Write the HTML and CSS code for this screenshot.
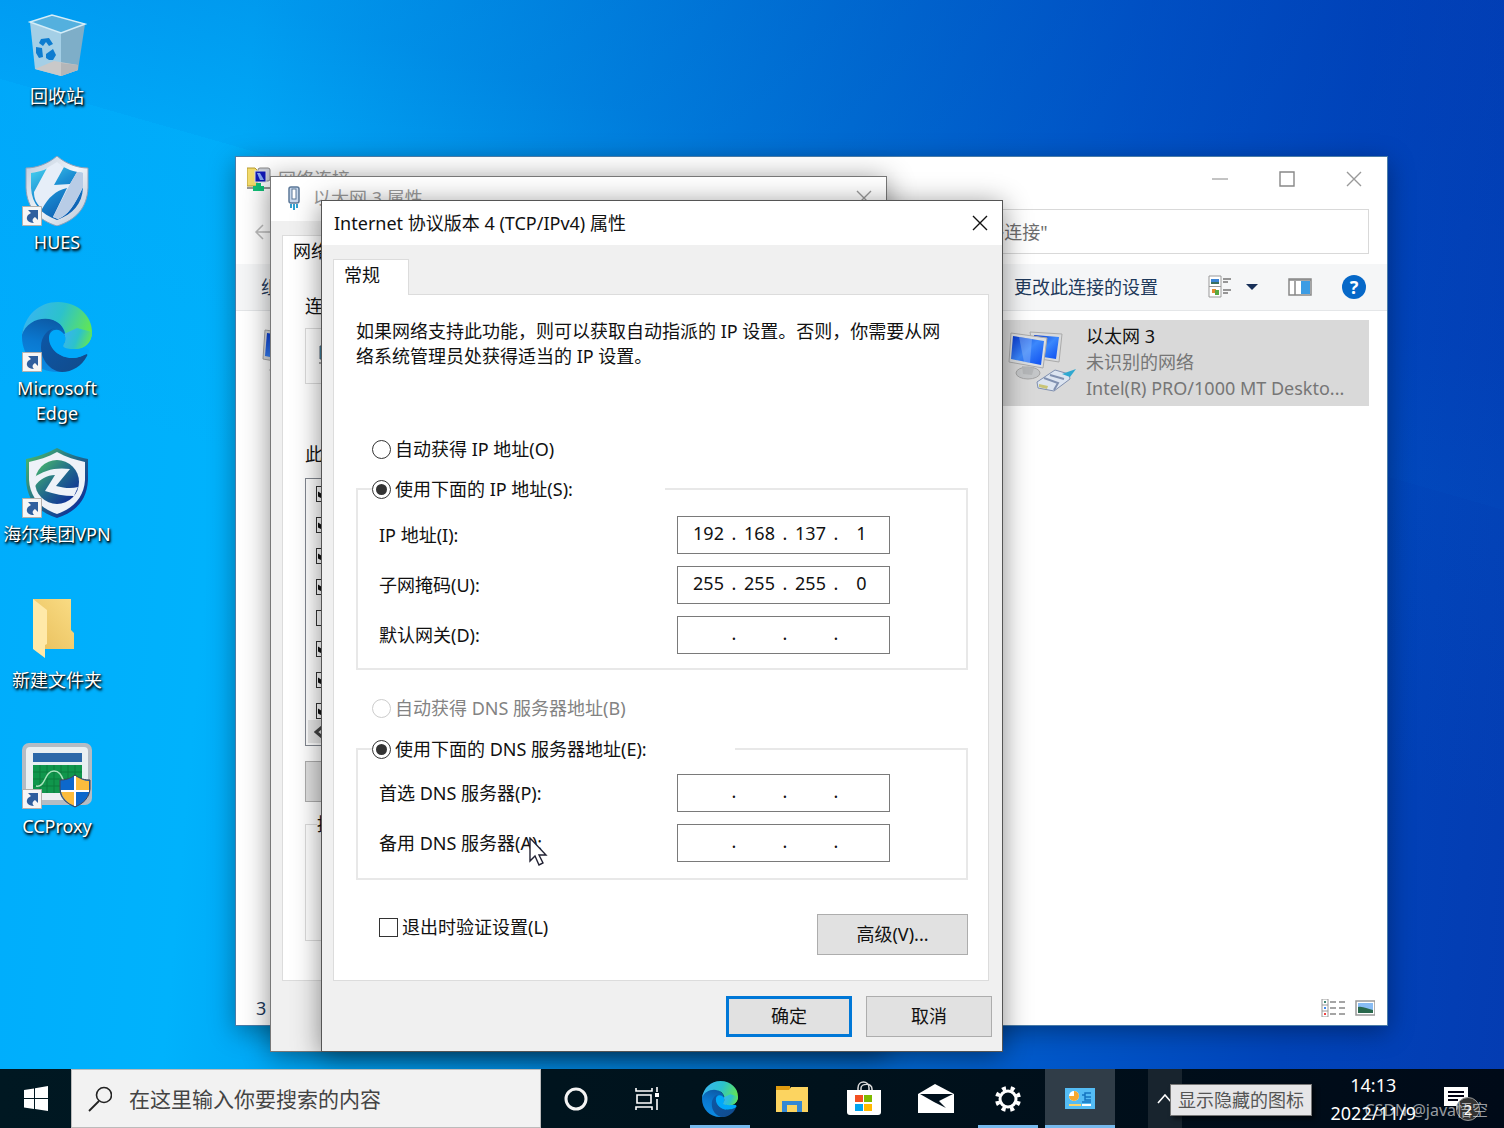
FILE: index.html
```html
<!DOCTYPE html>
<html lang="zh-CN">
<head>
    <meta charset="UTF-8">
    <meta name="viewport" content="width=device-width, initial-scale=1.0">
    <title>Internet 协议版本 4 (TCP/IPv4) 属性</title>
    <link rel="stylesheet" href="styles.css">
</head>
<body>
    <!-- shared icons -->
    <svg class="sprite" width="0" height="0" aria-hidden="true">
        <defs>
            <linearGradient id="edgeTop" x1="0" y1="0.3" x2="1" y2="0.6">
                <stop offset="0" stop-color="#38b4f2"/>
                <stop offset="0.5" stop-color="#2cc2cc"/>
                <stop offset="1" stop-color="#66e84c"/>
            </linearGradient>
            <linearGradient id="edgeBody" x1="0.6" y1="0" x2="0.3" y2="1">
                <stop offset="0" stop-color="#0c56a0"/>
                <stop offset="0.5" stop-color="#0a78d0"/>
                <stop offset="1" stop-color="#0c8ce4"/>
            </linearGradient>
            <linearGradient id="edgeDark" x1="0" y1="0" x2="1" y2="1">
                <stop offset="0" stop-color="#0c58a8"/>
                <stop offset="1" stop-color="#124a8a"/>
            </linearGradient>
            <linearGradient id="hFill" x1="0" y1="0" x2="0.6" y2="1">
                <stop offset="0" stop-color="#4cdcf4"/>
                <stop offset="0.5" stop-color="#1c90d4"/>
                <stop offset="1" stop-color="#0c5cb0"/>
            </linearGradient>
            <linearGradient id="hRim" x1="0" y1="0" x2="1" y2="1">
                <stop offset="0" stop-color="#b8c8da"/>
                <stop offset="0.5" stop-color="#f2f6fa"/>
                <stop offset="1" stop-color="#b4c2d4"/>
            </linearGradient>
            <linearGradient id="vpnFill" x1="0" y1="0" x2="1" y2="1">
                <stop offset="0" stop-color="#4cc068"/>
                <stop offset="0.5" stop-color="#20688c"/>
                <stop offset="1" stop-color="#0c1c98"/>
            </linearGradient>
            <linearGradient id="screen" x1="0" y1="0" x2="1" y2="1">
                <stop offset="0" stop-color="#0838d0"/>
                <stop offset="0.5" stop-color="#3c88fc"/>
                <stop offset="1" stop-color="#0c4cf0"/>
            </linearGradient>
            <linearGradient id="folderBack" x1="0" y1="1" x2="1" y2="0">
                <stop offset="0" stop-color="#e8bf5c"/>
                <stop offset="1" stop-color="#fadc84"/>
            </linearGradient>
        </defs>
        <symbol id="close" viewBox="0 0 16 16">
            <path d="M1 1 15 15M15 1 1 15" fill="none" stroke="currentColor" stroke-width="1.4"/>
        </symbol>
        <symbol id="edge" viewBox="0 0 70 70">
            <path d="M0 35C0 20 12 14 25 16C38 18 45 28 43 38L48 60L63 53C58 64 48 70 35 70C15 70 0 54 0 35Z" fill="url(#edgeBody)"/>
            <path d="M0 33C3 13 17 0 36 0C56 0 70 14 70 30C70 41 62 47 53 47C44 47 40 45 42 42C46 37 44 28 38 22C26 12 5 17 0 33Z" fill="url(#edgeTop)"/>
            <path d="M35 26C28 26 27 32 27 36C28 47 38 56 50 56C56 56 60 54 63 52C65 51 66 53 65 54C60 64 50 70 40 70C28 69 19 58 19 45C19 34 26 26 35 26Z" fill="url(#edgeDark)"/>
            <path d="M42 32C36 24 27 28 27 36C27 47 38 56 50 56C57 56 62 53 65 52C69 49 67 46 62 46C50 48 41 46 42 42C44 39 44 35 42 32Z" class="edge-gap"/>
            <path d="M42 32C45 37 43 40 42 42C39 46 45 47 53 47C62 47 70 41 70 30L55 26Z" fill="url(#edgeTop)"/>
        </symbol>
        <symbol id="shortcut" viewBox="0 0 20 20">
            <path d="M.5.5H19.500V19.500H.5Z" fill="#f6f6f6" stroke="#b4b0ac"/>
            <path d="M6 4H16V14L13 11C10 13 10 15 12 17C6 17 3 13 6 9L9 7Z" fill="#2f5f9e"/>
        </symbol>
        <symbol id="monitors" viewBox="0 0 70 70">
            <path d="M22 4 54 6 51 34 26 30Z" fill="#d8dadc" stroke="#aaa"/>
            <path d="M26 7 51 9 48 31 29 28Z" fill="url(#screen)"/>
            <ellipse cx="20" cy="45" rx="12" ry="6" fill="#c4c6c8" stroke="#a4a4a4"/>
            <path d="M14 38 26 40 24 47 15 46Z" fill="#b4b6b8"/>
            <path d="M3 5 39 10 35 40 1 34Z" fill="#dcdee0" stroke="#aaa"/>
            <path d="M5 8 36 13 33 37 3 31Z" fill="url(#screen)"/>
            <path d="M11 9 24 11 22 35 16 34Z" fill="#9cc4ff" opacity=".4"/>
            <path d="M29 54 47 42 61 46 62 51 46 63 30 60Z" fill="#dce4f0" stroke="#8090b0"/>
            <path d="M36 50 50 55 46 62M42 47 56 51" fill="none" stroke="#8090b0" stroke-width="2"/>
            <path d="M31 56 40 58 39 61 31 59Z" fill="#c8c478"/>
            <path d="M54 46 68 41 62 49Z" fill="#30a8d0"/>
        </symbol>
    </svg>

    <main class="desktop">
        <nav class="shortcuts" aria-label="桌面">
            <a class="shortcut" href="#bin">
                <svg viewBox="0 0 70 70">
                    <path d="M8 12 39 23 39 66 13 59Z" fill="#a4cfe6"/>
                    <path d="M39 23 63 14 56 60 39 66Z" fill="#7eaec8"/>
                    <path d="M13 59 32 51 56 55 56 60 39 66Z" fill="#c9c9c9"/>
                    <path d="M39 53 56 55 56 60 39 66Z" fill="#b4b6b8"/>
                    <path d="M8 12 30 5 63 14 39 23Z" fill="#54b0de" stroke="#d4edf8" stroke-width="1.500"/>
                    <g fill="#0c7cd0">
                        <path d="M19 29 27 28 31 34 27 36 24 32 21 36 17 33Z"/>
                        <path d="M14 37 20 38 21 47 17 48 14 43Z"/>
                        <path d="M24 44 31 39 34 45 31 50 27 50 24 48Z"/>
                    </g>
                </svg>
                <span>回收站</span>
            </a>
            <a class="shortcut" href="#hues">
                <svg viewBox="0 0 70 70">
                    <path d="M35 0C44 8 56 12 66 12V32C65 52 54 64 35 70C16 64 5 52 4 32V12C14 12 26 8 35 0Z" fill="url(#hRim)" stroke="#8ca0ba"/>
                    <path d="M35 7C44 13 52 16 61 17V32C60 48 51 58 35 64C19 58 10 48 9 32V17C18 16 26 13 35 7Z" fill="url(#hFill)"/>
                    <path d="M35 6 42 11 32 29 48 28 55 16 61 17V31C52 50 46 59 36 63L31 61 45 32C33 35 27 41 20 53 14 47 12 43 12 36L25 12Z" fill="#e6eef8"/>
                    <path d="M48 28 55 16 61 17V31C52 50 46 59 36 63L31 61Z" fill="#b8cce6"/>
                    <use href="#shortcut" x="0" y="50" width="20" height="20"/>
                </svg>
                <span>HUES</span>
            </a>
            <a class="shortcut" href="#edge-app">
                <svg viewBox="0 0 70 70">
                    <use href="#edge" width="70" height="70"/>
                    <use href="#shortcut" x="0" y="50" width="20" height="20"/>
                </svg>
                <span>Microsoft Edge</span>
            </a>
            <a class="shortcut" href="#vpn">
                <svg viewBox="0 0 70 70">
                    <path d="M35 0C46 6 56 9 66 11V32C65 52 54 64 35 70C16 64 5 52 4 32V11C14 9 24 6 35 0Z" fill="url(#vpnFill)"/>
                    <path d="M35 4C44 9 54 12 63 14V32C62 49 52 60 35 66C18 60 8 49 7 32V14C16 12 26 9 35 4Z" fill="#eef2f8"/>
                    <circle cx="35" cy="34" r="22" fill="url(#vpnFill)"/>
                    <path d="M11 30C22 22 34 19 48 21L34 38C42 40 49 41 56 39L52 48C42 48 32 46 23 43L33 27C25 27 18 31 13 38Z" fill="#eef2f8"/>
                    <use href="#shortcut" x="0" y="50" width="20" height="20"/>
                </svg>
                <span>海尔集团VPN</span>
            </a>
            <a class="shortcut" href="#folder">
                <svg viewBox="0 0 70 70">
                    <path d="M11 5H49V36L52 39V55H20Z" fill="url(#folderBack)"/>
                    <path d="M11 5 25 16V50L23 51V64L11 55Z" fill="#ffe9a8"/>
                </svg>
                <span>新建文件夹</span>
            </a>
            <a class="shortcut" href="#ccproxy">
                <svg viewBox="0 0 70 70">
                    <rect x="0" y="3" width="70" height="62" rx="7" fill="#b4bcc4"/>
                    <rect x="4" y="7" width="62" height="53" rx="4" fill="#eaf0f2"/>
                    <path d="M11 13H60V22H11Z" fill="#2c68a8"/>
                    <path d="M11 25H60V53H11Z" fill="#10964c"/>
                    <path d="M11 32H60M11 39H60M11 46H60M18 25V53M25 25V53M32 25V53M39 25V53M46 25V53M53 25V53" stroke="#0a7c3c"/>
                    <path d="M14 46C24 48 22 31 32 31S40 46 47 46" fill="none" stroke="#a8e4bc" stroke-width="1.500"/>
                    <path d="M53 35C58 39 63 40 68 40V49C67 58 62 63 53 67C44 63 38 58 38 49V40C43 40 48 39 53 35Z" fill="#0c68cc" stroke="#445"/>
                    <path d="M53 36C58 39 63 41 67 41V51H53ZM53 51V66C45 63 40 58 39 51Z" fill="#fcbc3c"/>
                    <path d="M53 36V66M39 51H67" stroke="#fff" stroke-width="2"/>
                    <use href="#shortcut" x="0" y="49" width="20" height="20"/>
                </svg>
                <span>CCProxy</span>
            </a>
        </nav>

        <section class="window connections" aria-label="网络连接">
            <header class="titlebar inactive">
                <svg width="24" height="24" viewBox="0 0 24 24">
                    <path d="M0 1H8L10 3V19H0Z" fill="#f4dc6c" stroke="#b89c30"/>
                    <rect x="11" y="1" width="12" height="13" rx="2" fill="#c8ccd4" stroke="#888"/>
                    <rect x="8" y="4" width="11" height="11" fill="#1018b8" stroke="#d8dce4"/>
                    <path d="M10 6H13L17 13H13Z" fill="#88a8f4"/>
                    <path d="M0 21H24" stroke="#999" stroke-width="2"/>
                    <path d="M9 16H14V19H17V24H6V19H9Z" fill="#10c078"/>
                </svg>
                <h2>网络连接</h2>
                <div class="window-buttons">
                    <button aria-label="最小化"><svg width="16" height="16"><path d="M0 8H16" stroke="#888"/></svg></button>
                    <button aria-label="最大化"><svg width="16" height="16"><path d="M1 1H15V15H1Z" fill="none" stroke="#888" stroke-width="1.400"/></svg></button>
                    <button aria-label="关闭"><svg width="16" height="16"><use href="#close"/></svg></button>
                </div>
            </header>
            <div class="address">
                <button aria-label="后退"><svg width="18" height="18" viewBox="0 0 18 18"><path d="M17 9H2M9 2 2 9 9 16" fill="none" stroke="#bbb" stroke-width="1.500"/></svg></button>
                <input type="text" class="search" aria-label="搜索" placeholder='搜索"网络连接"'>
            </div>
            <div class="toolbar">
                <button>组织</button>
                <button class="toolbar-change">更改此连接的设置</button>
                <div class="toolbar-icons">
                    <button aria-label="更改视图">
                        <svg width="50" height="24" viewBox="0 0 50 24">
                            <path d="M1 1H13V22H1ZM1 11.500H13" fill="#fff" stroke="#999"/>
                            <path d="M3 4H11V9H3Z" fill="#3c84d4"/><path d="M3 7H11V9H3Z" fill="#3a7060"/>
                            <path d="M4 14H8V18H4Z" fill="#e08c30"/><path d="M7 15H11V20H7Z" fill="#58a840"/>
                            <path d="M15 4H23M15 7H20M15 15H23M15 18H20" stroke="#777" stroke-width="1.300"/>
                            <path d="M38 9H50L44 15Z" fill="#183058"/>
                        </svg>
                    </button>
                    <button aria-label="预览窗格">
                        <svg width="24" height="18" viewBox="0 0 24 18">
                            <path d="M1 1H23V17H1Z" fill="#fff" stroke="#888" stroke-width="1.500"/>
                            <path d="M1 2H23M7 3V17" stroke="#888" stroke-width="1.500"/>
                            <path d="M13 3H22V16H13Z" fill="#3c9ce4"/>
                        </svg>
                    </button>
                    <button class="help" aria-label="帮助">?</button>
                </div>
            </div>
            <div class="adapters">
                <div class="adapter">
                    <svg width="70" height="70"><use href="#monitors"/></svg>
                </div>
                <div class="adapter selected">
                    <svg width="70" height="70"><use href="#monitors"/></svg>
                    <div>
                        <h3>以太网 3</h3>
                        <p>未识别的网络</p>
                        <p>Intel(R) PRO/1000 MT Deskto...</p>
                    </div>
                </div>
            </div>
            <footer class="statusbar">
                <span>3</span>
                <svg width="54" height="18" viewBox="0 0 54 18">
                    <path d="M1 0H7V18H1ZM1 6H7M1 12H7" fill="#fff" stroke="#999"/>
                    <path d="M3 3H5" stroke="#487" stroke-width="2"/><path d="M3 9H5" stroke="#48e" stroke-width="2"/><path d="M3 15H5" stroke="#e44" stroke-width="2"/>
                    <path d="M9 3H15M18 3H24M9 9H15M18 9H24M9 15H15M18 15H24" stroke="#888" stroke-width="1.500"/>
                    <path d="M35 2H54V16H35Z" fill="#fff" stroke="#999" stroke-width="1.500"/>
                    <path d="M37 4H52V14H37Z" fill="#88bcf4"/>
                    <path d="M37 8C42 7 46 10 52 11V14H37Z" fill="#28684c"/>
                </svg>
            </footer>
        </section>

        <section class="window dialog adapter-dialog" aria-label="以太网 3 属性">
            <header class="titlebar inactive">
                <svg width="14" height="24" viewBox="0 0 14 24">
                    <rect x="2" y="1" width="10" height="16" rx="2" fill="#c8d8ec" stroke="#5c7898" stroke-width="1.500"/>
                    <rect x="5" y="3" width="4" height="10" fill="#fff" stroke="#5c7898"/>
                    <path d="M4 18V22M7 18V24M10 18V22" stroke="#30a0d0" stroke-width="2"/>
                </svg>
                <h2>以太网 3 属性</h2>
                <button class="close" aria-label="关闭"><svg width="16" height="16"><use href="#close"/></svg></button>
            </header>
            <div class="dialog-body">
                <button class="tab">网络</button>
                <div class="panel">
                    <p>连接时使用:</p>
                    <div class="adapter-name">
                        <svg width="22" height="22" viewBox="0 0 22 22"><path d="M1 1H21V14H1Z" fill="#2c9cc8" stroke="#567"/><path d="M0 18H22" stroke="#aaa" stroke-width="2"/></svg>
                    </div>
                    <p class="list-title">此连接使用下列项目(O):</p>
                    <div class="protocols">
                        <input type="checkbox" aria-label="Microsoft 网络客户端" checked>
                        <input type="checkbox" aria-label="文件和打印机共享" checked>
                        <input type="checkbox" aria-label="QoS 数据包计划程序" checked>
                        <input type="checkbox" aria-label="Internet 协议版本 4" checked>
                        <input type="checkbox" aria-label="网络适配器多路传送器">
                        <input type="checkbox" aria-label="LLDP 协议驱动程序" checked>
                        <input type="checkbox" aria-label="Internet 协议版本 6" checked>
                        <input type="checkbox" aria-label="链路层拓扑发现" checked>
                        <div class="scroll"><svg width="10" height="12"><path d="M8 1 2 6 8 11" fill="none" stroke="#444" stroke-width="3"/></svg></div>
                    </div>
                    <button class="button" aria-label="安装"></button>
                    <fieldset class="description">
                        <legend>描述</legend>
                    </fieldset>
                </div>
                <div class="actions">
                    <button class="button" aria-label="确定"></button>
                    <button class="button" aria-label="取消"></button>
                </div>
            </div>
        </section>

        <section class="window dialog ip-dialog" aria-label="Internet 协议版本 4 (TCP/IPv4) 属性">
            <header class="titlebar">
                <h2>Internet 协议版本 4 (TCP/IPv4) 属性</h2>
                <button class="close" aria-label="关闭"><svg width="16" height="16"><use href="#close"/></svg></button>
            </header>
            <form class="dialog-body">
                <button type="button" class="tab">常规</button>
                <div class="panel">
                    <p class="intro">如果网络支持此功能，则可以获取自动指派的 IP 设置。否则，你需要从网<br>络系统管理员处获得适当的 IP 设置。</p>

                    <label class="choice auto-ip"><input type="radio" name="ip">自动获得 IP 地址(O)</label>
                    <fieldset class="group ip-group">
                        <legend><label class="choice"><input type="radio" name="ip" checked>使用下面的 IP 地址(S):</label></legend>
                        <div class="field">
                            <label for="ip1">IP 地址(I):</label>
                            <div class="octets">
                                <input id="ip1" type="text" value="192"><span>.</span><input type="text" aria-label="IP 2" value="168"><span>.</span><input type="text" aria-label="IP 3" value="137"><span>.</span><input type="text" aria-label="IP 4" value="1">
                            </div>
                        </div>
                        <div class="field">
                            <label for="mask1">子网掩码(U):</label>
                            <div class="octets">
                                <input id="mask1" type="text" value="255"><span>.</span><input type="text" aria-label="掩码 2" value="255"><span>.</span><input type="text" aria-label="掩码 3" value="255"><span>.</span><input type="text" aria-label="掩码 4" value="0">
                            </div>
                        </div>
                        <div class="field">
                            <label for="gate1">默认网关(D):</label>
                            <div class="octets">
                                <input id="gate1" type="text"><span>.</span><input type="text" aria-label="网关 2"><span>.</span><input type="text" aria-label="网关 3"><span>.</span><input type="text" aria-label="网关 4">
                            </div>
                        </div>
                    </fieldset>

                    <label class="choice auto-dns"><input type="radio" name="dns" disabled>自动获得 DNS 服务器地址(B)</label>
                    <fieldset class="group dns-group">
                        <legend><label class="choice"><input type="radio" name="dns" checked>使用下面的 DNS 服务器地址(E):</label></legend>
                        <div class="field">
                            <label for="dns1">首选 DNS 服务器(P):</label>
                            <div class="octets">
                                <input id="dns1" type="text"><span>.</span><input type="text" aria-label="首选 2"><span>.</span><input type="text" aria-label="首选 3"><span>.</span><input type="text" aria-label="首选 4">
                            </div>
                        </div>
                        <div class="field">
                            <label for="alt1">备用 DNS 服务器(A):</label>
                            <div class="octets">
                                <input id="alt1" type="text"><span>.</span><input type="text" aria-label="备用 2"><span>.</span><input type="text" aria-label="备用 3"><span>.</span><input type="text" aria-label="备用 4">
                            </div>
                        </div>
                    </fieldset>

                    <div class="panel-bottom">
                        <label class="choice validate"><input type="checkbox">退出时验证设置(L)</label>
                        <button type="button" class="button wide">高级(V)...</button>
                    </div>
                </div>
                <div class="actions">
                    <button type="button" class="button primary">确定</button>
                    <button type="button" class="button">取消</button>
                </div>
            </form>
        </section>

        <svg class="cursor" width="20" height="30" viewBox="0 0 20 30">
            <path d="M1 1V24L6 19 10 28 14 26 10 18H17Z" fill="#fff" stroke="#223" stroke-width="1.400"/>
        </svg>
    </main>

    <footer class="taskbar">
        <button class="start" aria-label="开始">
            <svg width="24" height="26" viewBox="0 0 24 26"><path d="M0 4 10 2.500V12H0ZM11 2.300 24 0V12H11ZM0 13H10V23L0 21.500ZM11 13H24V25L11 23Z" fill="#fff"/></svg>
        </button>
        <div class="task-search">
            <svg width="24" height="26" viewBox="0 0 24 26"><circle cx="16" cy="9" r="7.500" fill="none" stroke="#222" stroke-width="1.600"/><path d="M11 15 1 25" stroke="#222" stroke-width="1.800"/></svg>
            <input type="text" aria-label="搜索" placeholder="在这里输入你要搜索的内容">
        </div>
        <div class="apps">
            <button aria-label="Cortana"><svg width="24" height="24"><circle cx="12" cy="12" r="10" fill="none" stroke="#f4f4f4" stroke-width="3"/></svg></button>
            <button aria-label="任务视图">
                <svg width="26" height="24" viewBox="0 0 26 24"><path d="M1 1V4H17V1M1 23V20H17V23M2 8H16V16H2ZM22 0V5M22 12V23" fill="none" stroke="#fff" stroke-width="1.600"/><path d="M20 6H24V10H20Z" fill="#fff"/></svg>
            </button>
            <button class="running edge-task" aria-label="Microsoft Edge"><svg width="36" height="36"><use href="#edge"/></svg></button>
            <button aria-label="文件资源管理器">
                <svg width="32" height="28" viewBox="0 0 32 28"><path d="M0 1H14V6H0Z" fill="#e09c10"/><path d="M0 5H13L15 2H32V27H0Z" fill="#fcd460"/><path d="M6 16H26V27H21V20H11V27H6Z" fill="#3488d4"/></svg>
            </button>
            <button aria-label="Microsoft Store">
                <svg width="34" height="36" viewBox="0 0 34 36">
                    <path d="M11 11V7C11 -1 22 -1 22 7V11M14 11V7C14 3 25 1 25 8V11" fill="none" stroke="#ddd" stroke-width="1.500"/>
                    <path d="M0 9H34V31Q34 34 31 34H3Q0 34 0 31Z" fill="#fff"/>
                    <path d="M8 14H16V21H8Z" fill="#f25022"/><path d="M17 14H25V21H17Z" fill="#7fba00"/><path d="M8 23H16V30H8Z" fill="#00a4ef"/><path d="M17 23H25V30H17Z" fill="#ffb900"/>
                </svg>
            </button>
            <button aria-label="邮件">
                <svg width="36" height="30" viewBox="0 0 36 30"><path d="M0 10 17 0 36 10V29H0Z" fill="#fff"/><path d="M2 10H35L21 17 28 24 16 18Z" fill="#00101c"/></svg>
            </button>
            <button class="running" aria-label="设置">
                <svg width="28" height="28" viewBox="0 0 28 28"><circle cx="14" cy="14" r="8" fill="none" stroke="#fff" stroke-width="3"/><circle cx="14" cy="14" r="11" fill="none" stroke="#fff" stroke-width="4" stroke-dasharray="4 4.640" transform="rotate(12 14 14)"/></svg>
            </button>
            <button class="running active" aria-label="控制面板">
                <svg width="30" height="22" viewBox="0 0 30 22"><path d="M0 0H30V21H0Z" fill="#54bcf4"/><circle cx="9" cy="8" r="5" fill="#fff"/><path d="M9 8V3A5 5 0 1 1 4 8Z" fill="#f4a830"/><path d="M17 7H20V5H26M20 7V12H26M20 9H26M17 14H26" fill="none" stroke="#1474c0" stroke-width="1.500"/><path d="M4 17H16" stroke="#fcd468" stroke-width="2"/><path d="M17 17H26" stroke="#fff" stroke-width="2"/></svg>
            </button>
        </div>
        <div class="tray">
            <button class="chevron" aria-describedby="trayTip" aria-label="隐藏的图标"><svg width="16" height="10"><path d="M1 9 8 1 15 9" fill="none" stroke="#fff" stroke-width="1.600"/></svg></button>
            <div class="tooltip" id="trayTip" role="tooltip">显示隐藏的图标</div>
            <div class="clock"><time>14:13</time><span>2022/11/9</span></div>
            <button class="notices" aria-label="通知">
                <svg width="24" height="24" viewBox="0 0 24 24"><path d="M0 0H24V19H16L12 23V19H0Z" fill="#fff"/><path d="M4 5H20M4 9H20M4 13H14" stroke="#001" stroke-width="1.800"/></svg>
                <span class="badge">2</span>
            </button>
        </div>
        <span class="watermark">CSDN @java悟空</span>
    </footer>
</body>
</html>
```

FILE: styles.css
```css
* {
    box-sizing: border-box;
}
body {
    margin: 0;
    min-height: 100vh;
    display: flex;
    flex-direction: column;
    overflow: hidden;
    font-family: "Noto Sans", "Noto Sans CJK SC", sans-serif;
    font-size: 18px;
    line-height: 26px;
    color: #111;
}
h2, h3, p {
    margin: 0;
    font-size: inherit;
    font-weight: normal;
}
button, input {
    font: inherit;
    color: inherit;
}
button {
    padding: 0;
    border: none;
    background: none;
}
svg {
    flex: none;
    display: block;
}
.sprite {
    position: absolute;
}
.edge-gap {
    fill: #00a8fa;
}
.edge-task .edge-gap {
    fill: #00121c;
}

/* desktop */
.desktop {
    position: relative;
    flex: 1;
    background:
        linear-gradient(196deg, rgba(0, 60, 180, 0.3) 0%, rgba(0, 70, 190, 0.22) 24%, rgba(0, 110, 215, 0.14) 34%, rgba(0, 120, 220, 0.08) 34%, rgba(0, 180, 255, 0) 55%),
        linear-gradient(95deg, #00acfc 0%, #00b2fc 16%, #0096ea 34%, #0074d6 54%, #0056c8 72%, #0044ba 86%, #043cb2 100%);
}
.shortcuts {
    display: flex;
    flex-direction: column;
    width: 114px;
    padding-top: 10px;
}
.shortcut {
    display: flex;
    flex-direction: column;
    align-items: center;
    gap: 4px;
    height: 146px;
    color: #fff;
    line-height: 25px;
    text-align: center;
    text-decoration: none;
    text-shadow: 1px 1px 2px #000, 1px 2px 3px #000;
}
.shortcut span {
    width: min-content;
    word-break: keep-all;
}
.shortcut svg {
    width: 70px;
    height: 70px;
}

/* windows */
.window {
    position: absolute;
    display: flex;
    flex-direction: column;
    background: #fff;
    border: 1px solid #4a7ca8;
    box-shadow: 0 6px 24px rgba(0, 0, 0, 0.35);
}
.titlebar {
    display: flex;
    align-items: center;
    height: 44px;
    padding: 0 13px 0 12px;
    background: #fff;
}
.titlebar h2 {
    flex: 1;
}
.inactive {
    color: #999;
}
.close svg {
    margin-right: 1px;
}

.connections {
    left: 235px;
    top: 156px;
    width: 1153px;
    height: 870px;
}
.connections .titlebar {
    gap: 7px;
    padding-left: 11px;
    padding-right: 25px;
}
.window-buttons {
    display: flex;
    gap: 51px;
}
.address {
    display: flex;
    justify-content: space-between;
    align-items: center;
    padding: 8px 18px 10px;
}
.search {
    width: 454px;
    height: 45px;
    padding: 0 9px;
    border: 1px solid #d9d9d9;
}
.search::placeholder {
    color: #6d6d6d;
}
.toolbar {
    display: flex;
    align-items: center;
    height: 47px;
    padding: 0 21px 0 25px;
    background: #f5f6f7;
    border-bottom: 1px solid #e4e6e8;
    color: #1e395b;
}
.toolbar-change {
    margin-left: auto;
    margin-right: 50px;
}
.toolbar-icons {
    display: flex;
    align-items: center;
    gap: 30px;
}
.help {
    width: 24px;
    height: 24px;
    border-radius: 50%;
    background: #0668c8;
    color: #fff;
    font-weight: bold;
    line-height: 24px;
}
.adapters {
    display: flex;
    justify-content: space-between;
    padding: 9px 18px 0 26px;
    flex: 1;
}
.adapter {
    display: flex;
    gap: 8px;
    height: 86px;
}
.adapter p {
    color: #767676;
}
.adapter svg {
    margin-top: 5px;
}
.adapter.selected {
    width: 372px;
    padding: 3px 11px;
    background: #d9d9d9;
    white-space: nowrap;
}
.statusbar {
    display: flex;
    justify-content: space-between;
    align-items: center;
    height: 35px;
    padding: 0 12px 0 20px;
    color: #1e395b;
}

/* dialogs */
.dialog {
    background: #f0f0f0;
    border-color: #555;
    box-shadow: 0 4px 26px rgba(0, 0, 0, 0.45);
}
.dialog-body {
    padding: 14px 13px 14px 11px;
}
.tab {
    display: block;
    position: relative;
    width: 76px;
    height: 36px;
    margin-bottom: -1px;
    padding: 0 10px 5px;
    background: #fff;
    border: 1px solid #dcdcdc;
    border-bottom: none;
    text-align: left;
}
.panel {
    padding: 24px 20px 25px 22px;
    background: #fff;
    border: 1px solid #dcdcdc;
}
.actions {
    display: flex;
    justify-content: flex-end;
    gap: 14px;
    padding-top: 15px;
    margin-right: -3px;
}
.button {
    display: block;
    width: 126px;
    height: 41px;
    padding-bottom: 2px;
    background: #e1e1e1;
    border: 1px solid #adadad;
}
.button.wide {
    width: 151px;
}
.button.primary {
    border: 3px solid #0078d7;
}

.adapter-dialog {
    left: 270px;
    top: 176px;
    width: 617px;
    border-color: #777;
}
.adapter-dialog .titlebar {
    gap: 12px;
    padding-left: 16px;
    padding-bottom: 3px;
}
.adapter-dialog .panel {
    padding: 22px 22px 39px;
}
.adapter-name {
    display: flex;
    align-items: center;
    height: 56px;
    margin-top: 9px;
    padding: 0 13px;
    border: 1px solid #dcdcdc;
}
.list-title {
    margin-top: 57px;
}
.protocols {
    display: flex;
    flex-direction: column;
    gap: 15px;
    height: 268px;
    margin: 11px 0 15px;
    padding-top: 7px;
    border: 1px solid #828790;
}
.scroll {
    display: flex;
    align-items: center;
    height: 23px;
    margin: -14px 0 0 2px;
    padding-left: 6px;
    background: #e8e8e8;
}
.description {
    height: 130px;
    margin: 9px 0 0;
    padding: 0 11px;
    border: 1px solid #dcdcdc;
}
.description legend {
    padding: 0;
}

.ip-dialog {
    left: 321px;
    top: 200px;
    width: 682px;
}
.intro {
    line-height: 25px;
    white-space: nowrap;
}
.choice {
    display: flex;
    align-items: center;
    gap: 4px;
    height: 26px;
}
input[type="radio"],
input[type="checkbox"] {
    appearance: none;
    flex: none;
    display: grid;
    place-items: center;
    width: 19px;
    height: 19px;
    margin: 0;
    background: #fff;
    border: 1px solid #333;
}
input[type="radio"] {
    border-radius: 50%;
}
input[type="radio"]:checked::before {
    content: "";
    width: 11px;
    height: 11px;
    border-radius: 50%;
    background: #333;
}
.protocols input[type="checkbox"] {
    width: 16px;
    height: 16px;
    margin-left: 10px;
}
.protocols input[type="checkbox"]:checked::before {
    content: "";
    width: 12px;
    height: 10px;
    background: #111;
    clip-path: polygon(0 25%, 40% 55%, 100% 0, 100% 35%, 40% 100%, 0 75%);
}
.choice:has(input:disabled) {
    color: #838383;
}
input[type="radio"]:disabled {
    border-color: #ccc;
}
.auto-ip {
    margin: 67px 0 14px 16px;
}
.auto-dns {
    margin: 25px 0 15px 16px;
}
.group {
    margin: 0;
    padding: 0 14px;
    border: 2px solid #e8e8e8;
}
.group legend {
    padding: 0;
}
.ip-group {
    padding-top: 14px;
    padding-bottom: 14px;
}
.ip-group legend {
    width: 293px;
}
.dns-group {
    padding-top: 12px;
    padding-bottom: 16px;
}
.dns-group legend {
    width: 363px;
}
.field {
    display: grid;
    grid-template-columns: 298px 213px;
    align-items: center;
    margin-left: 7px;
}
.field + .field {
    margin-top: 12px;
}
.octets {
    display: flex;
    height: 38px;
    padding: 0 0 5px 9px;
    border: 1px solid #7a7a7a;
}
.octets input {
    width: 43px;
    padding: 0;
    border: none;
    background: none;
    text-align: center;
}
.octets span {
    width: 8px;
    line-height: 32px;
    text-align: center;
}
.panel-bottom {
    display: flex;
    justify-content: space-between;
    align-items: flex-start;
    margin-top: 34px;
}
.validate {
    margin-left: 23px;
}
.cursor {
    position: absolute;
    left: 529px;
    top: 837px;
}

/* taskbar */
.taskbar {
    position: relative;
    display: flex;
    height: 59px;
    background: linear-gradient(90deg, #001822, #00121c 55%, #000a18);
    color: #fff;
}
.start {
    display: grid;
    place-items: center;
    width: 71px;
}
.task-search {
    display: flex;
    align-items: center;
    gap: 17px;
    width: 470px;
    padding-left: 16px;
    background: #f2f2f2;
    border: 1px solid #bbb;
}
.task-search input {
    flex: 1;
    min-width: 0;
    padding: 0;
    border: none;
    background: none;
    font-size: 21px;
}
.task-search input::placeholder {
    color: #444;
}
.apps {
    display: flex;
    gap: 2px;
}
.apps button {
    display: grid;
    place-items: center;
    width: 70px;
    border: solid transparent;
    border-width: 3px 5px 0;
    border-bottom: 3px solid transparent;
}
.apps .running {
    border-width: 3px 0;
    border-bottom-color: #76b9ed;
    width: 60px;
    margin: 0 5px;
}
.apps .active {
    width: 70px;
    margin: 0;
    background: #303d48;
}
.tray {
    display: flex;
    align-items: center;
    margin-left: auto;
    padding-right: 36px;
}
.chevron {
    display: grid;
    place-items: center;
    width: 34px;
    height: 59px;
    background: #18242e;
}
.tooltip {
    position: absolute;
    right: 192px;
    top: 15px;
    height: 32px;
    padding: 2px 7px;
    background: #e6e6e8;
    border: 1px solid #777;
    color: #555;
    box-shadow: 3px 3px 4px rgba(0, 0, 0, 0.5);
}
.clock {
    display: flex;
    flex-direction: column;
    align-items: center;
    margin-left: 149px;
    line-height: 28px;
}
.notices {
    position: relative;
    margin-left: 28px;
}
.badge {
    position: absolute;
    left: 12px;
    top: 10px;
    width: 24px;
    height: 24px;
    border: 1px solid #999;
    border-radius: 50%;
    background: #333;
    font-size: 15px;
    line-height: 22px;
}
.watermark {
    position: absolute;
    right: 16px;
    bottom: 5px;
    color: rgba(255, 255, 255, 0.6);
    font-size: 16px;
}
```
